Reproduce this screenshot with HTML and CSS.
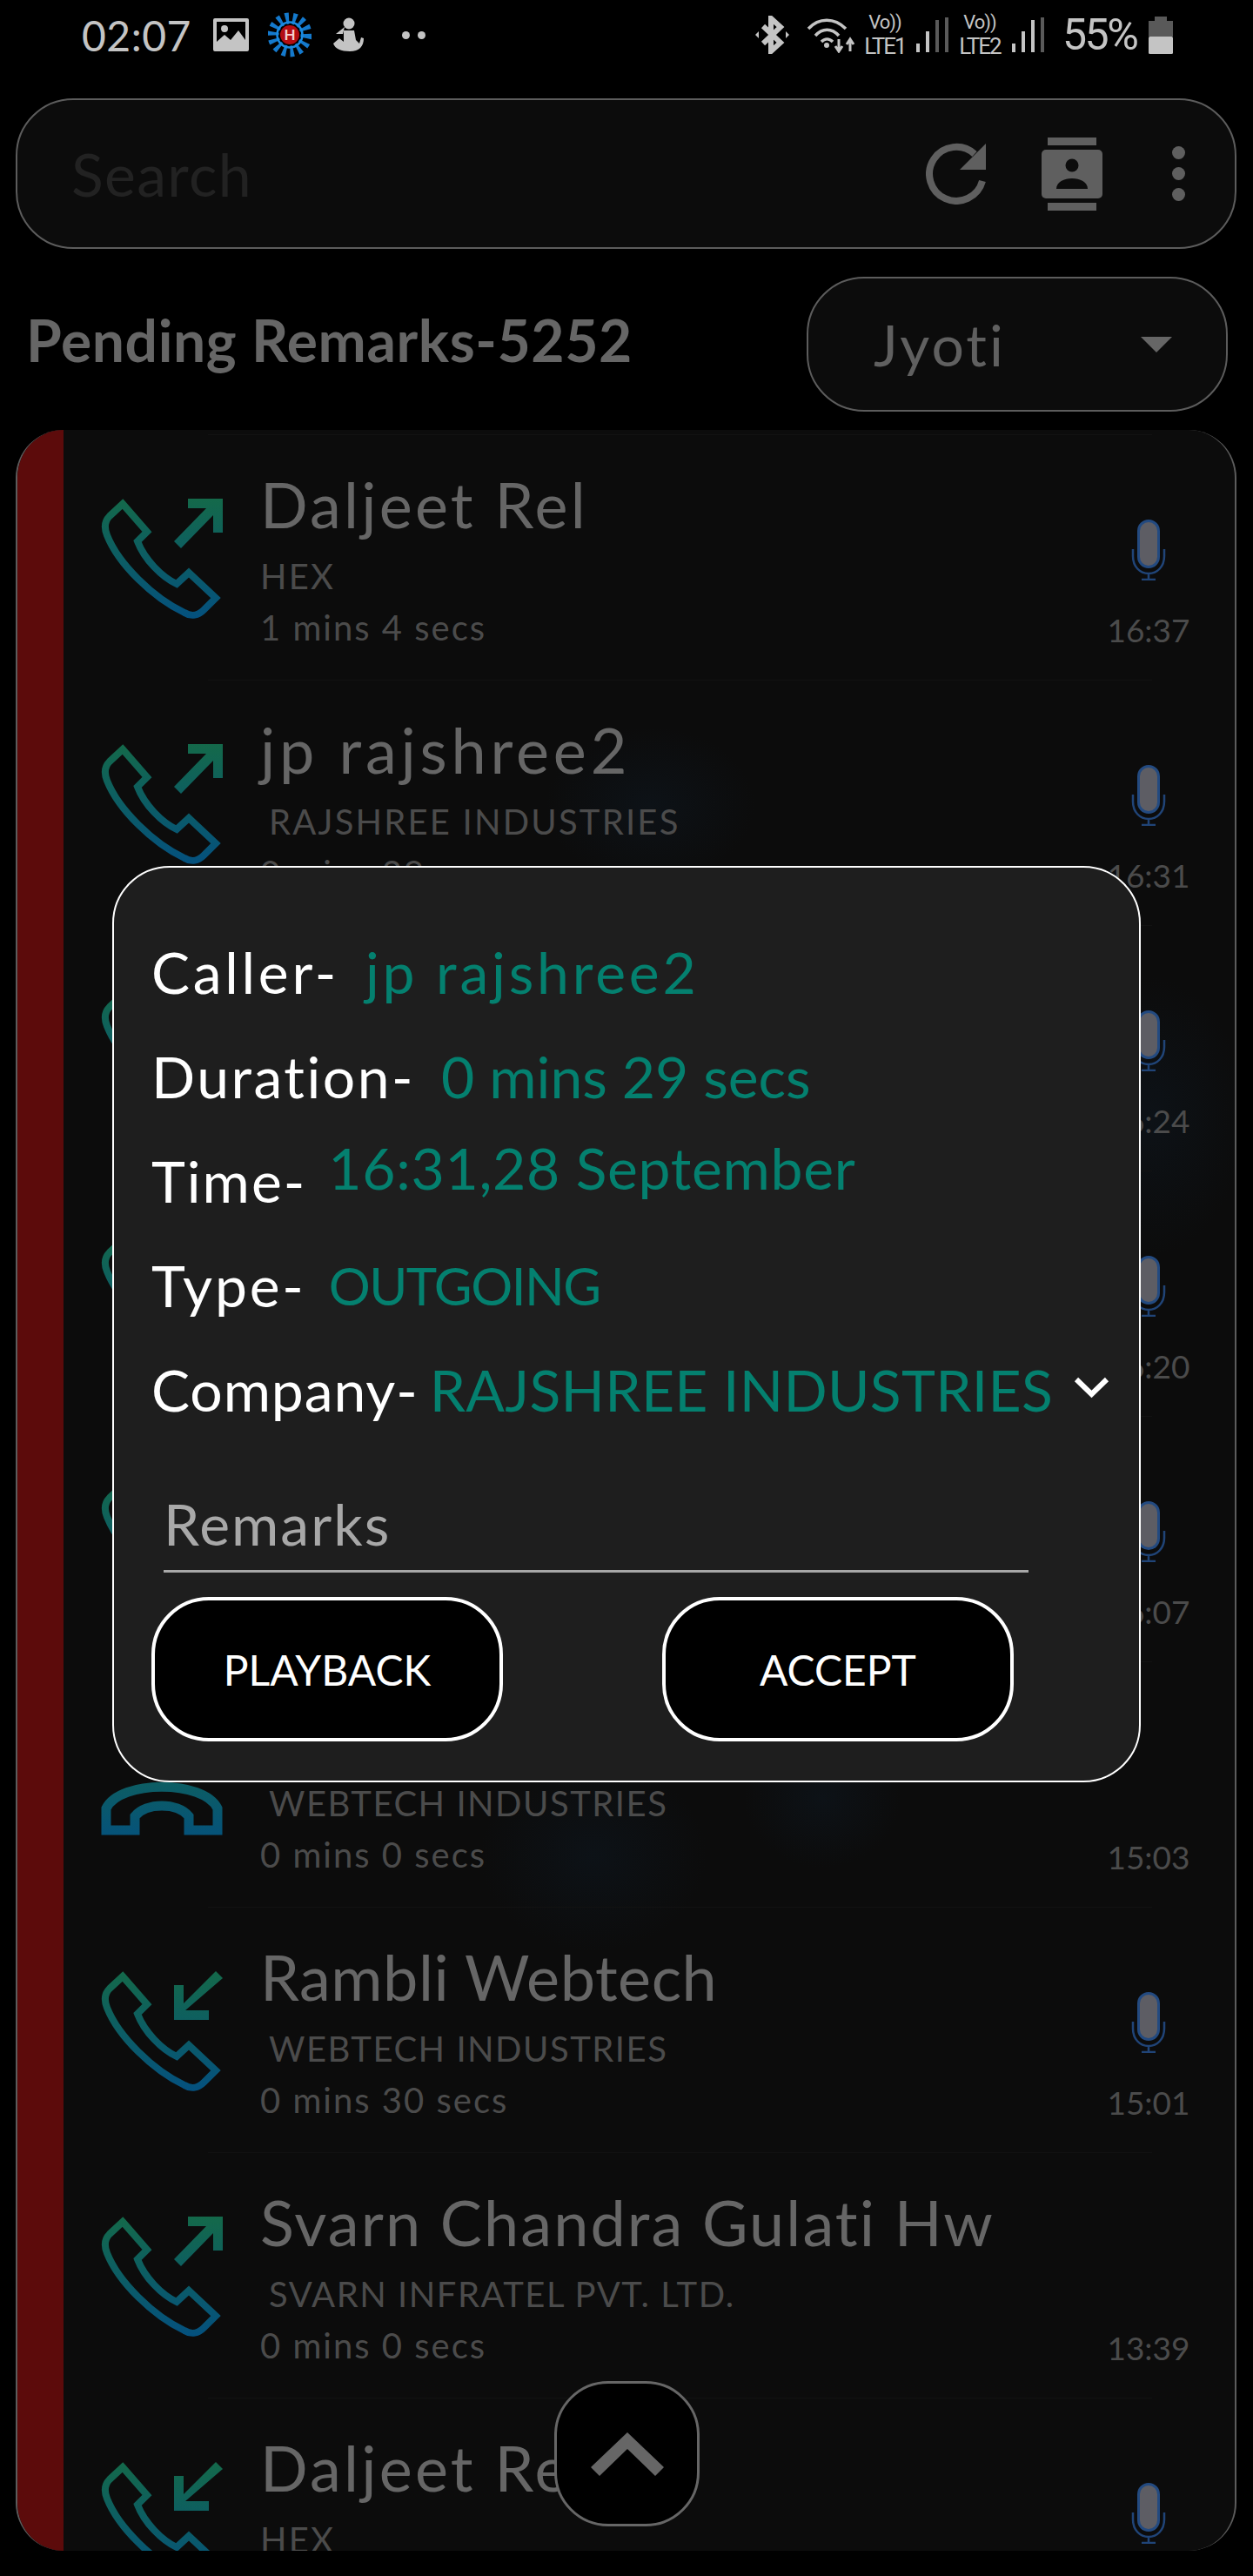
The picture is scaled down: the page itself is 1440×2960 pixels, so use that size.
FILE: index.html
```html
<!DOCTYPE html>
<html lang="en">
<head>
    <meta charset="UTF-8">
    <meta name="viewport" content="width=device-width, initial-scale=1.0">
    <title>Pending Remarks</title>
    <link rel="stylesheet" href="styles.css">
</head>
<body>
    <svg class="defs" width="0" height="0">
        <defs>
            <linearGradient id="callGrad" gradientUnits="userSpaceOnUse" x1="0" y1="0" x2="0" y2="140">
                <stop offset="0" stop-color="#14694a"/>
                <stop offset="1" stop-color="#04507f"/>
            </linearGradient>
            <symbol id="handset" viewBox="0 0 140 140">
                <path d="M25 6 L53 38 L42 49 C50 70 70 90 87 98 L101 85 L132 114 L118 128 C112 134 104 136 96 131 C60 114 20 75 7 42 C3 32 5 25 10 20 Z" fill="none" stroke="url(#callGrad)" stroke-width="8"/>
            </symbol>
            <symbol id="outCall" viewBox="0 0 140 140">
                <use href="#handset" width="140" height="140"/>
                <polygon points="100,0 140,0 140,39 129,39 129,19 92,57 84,49 121,11 100,11" fill="url(#callGrad)"/>
            </symbol>
            <symbol id="inCall" viewBox="0 0 140 140">
                <use href="#handset" width="140" height="140"/>
                <polygon points="132,0 140,8 97,45 124,45 124,56 84,56 84,16 95,16 95,37" fill="url(#callGrad)"/>
            </symbol>
            <symbol id="hangCall" viewBox="0 0 140 140">
                <path d="M6 120 V95 C22 62 118 62 134 95 V120 H101 V104 C88 88 52 88 39 104 V120 Z" fill="none" stroke="url(#callGrad)" stroke-width="11"/>
            </symbol>
            <symbol id="mic" viewBox="0 0 40 70">
                <rect x="8.5" y="1.5" width="23" height="53" rx="11.5" fill="#5d5d64" stroke="#234a80" stroke-width="3"/>
                <path d="M2 34 V42 C2 54 10 62 20 62 C30 62 38 54 38 42 V34 M20 62 V69 M12 69 H28" fill="none" stroke="#204477" stroke-width="2.5"/>
            </symbol>
        </defs>
    </svg>

    <div class="status-bar">
        <span class="clock">02:07</span>
        <svg class="st-img" viewBox="0 0 41 38"><path d="M2 0 H39 A2 2 0 0 1 41 2 V36 A2 2 0 0 1 39 38 H2 A2 2 0 0 1 0 36 V2 A2 2 0 0 1 2 0 Z M4 4 V27 L13 19 L20 25 L29 14 L37 25 V4 Z" fill="#c4c4c4" fill-rule="evenodd"/><circle cx="13" cy="12" r="4" fill="#c4c4c4"/></svg>
        <svg class="st-logo" viewBox="0 0 50 54">
            <circle cx="25" cy="27" r="19" fill="none" stroke="#1479cc" stroke-width="13" stroke-dasharray="4 4.4"/>
            <circle cx="25" cy="27" r="14.5" fill="none" stroke="#1a8ae0" stroke-width="2.5"/>
            <circle cx="25" cy="27" r="11" fill="#b30d12"/>
            <text x="25" y="33" class="logo-h" text-anchor="middle">H</text>
        </svg>
        <svg class="st-fig" viewBox="0 0 36 40"><circle cx="19" cy="7" r="6.5" fill="#c4c4c4"/><path d="M14 11 L4 19 L12 19 Z" fill="#c4c4c4"/><path d="M13 15 H25 L27 26 L31 30 L33 23 L36 24 C36 33 31 39 20 39 C10 39 3 36 1 30 L8 24 L13 28 Z" fill="#c4c4c4"/></svg>
        <span class="st-dots"><i></i><i></i></span>

        <svg class="st-bt" viewBox="0 0 39 44"><path d="M9 12 L29 31 L18 41 V3 L29 13 L9 32" fill="none" stroke="#c4c4c4" stroke-width="6"/><path d="M0 22 L4 18 V26 Z M39 22 L35 18 V26 Z" fill="#c4c4c4"/></svg>
        <svg class="st-wifi" viewBox="0 0 57 42">
            <path d="M2 14 C14 1 32 1 45 14 M10 22 C18 13 29 13 37 22 M17 29 C21 25 26 25 30 29" fill="none" stroke="#c4c4c4" stroke-width="3.5"/>
            <circle cx="23" cy="33" r="3" fill="#c4c4c4"/>
            <path d="M37 26 V38 M33 34 L37 40 L41 34 M50 40 V28 M46 32 L50 26 L54 32" fill="none" stroke="#c4c4c4" stroke-width="3"/>
        </svg>
        <span class="st-lte lte-one"><b class="vo">Vo))</b><b>LTE1</b></span>
        <svg class="st-signal sig-one" viewBox="0 0 37 40"><rect x="0" y="30" width="4" height="10" fill="#c4c4c4"/><rect x="11" y="16" width="4" height="24" fill="#c4c4c4"/><rect x="22" y="3" width="4" height="37" fill="#5a5a5a"/><rect x="33" y="0" width="4" height="40" fill="#5a5a5a"/></svg>
        <span class="st-lte lte-two"><b class="vo">Vo))</b><b>LTE2</b></span>
        <svg class="st-signal sig-two" viewBox="0 0 37 40"><rect x="0" y="30" width="4" height="10" fill="#c4c4c4"/><rect x="11" y="16" width="4" height="24" fill="#c4c4c4"/><rect x="22" y="3" width="4" height="37" fill="#c4c4c4"/><rect x="33" y="0" width="4" height="40" fill="#5a5a5a"/></svg>
        <span class="st-pct">55%</span>
        <svg class="st-bat" viewBox="0 0 28 43"><rect x="7" y="0" width="14" height="5" fill="#595959"/><rect x="0" y="5" width="28" height="18" fill="#595959"/><rect x="0" y="23" width="28" height="20" rx="1.5" fill="#c4c4c4"/></svg>
    </div>

    <div class="search-bar">
        <span class="search-text">Search</span>
        <svg class="ic-refresh" viewBox="0 0 70 71"><path d="M56 13 A31 31 0 1 0 65 44" fill="none" stroke="#5f5f5f" stroke-width="8"/><polygon points="69,1 69,31 39,31" fill="#5f5f5f"/></svg>
        <svg class="ic-contact" viewBox="0 0 70 84">
            <rect x="7" y="0" width="56" height="9" fill="#5f5f5f"/>
            <rect x="7" y="75" width="56" height="9" fill="#5f5f5f"/>
            <rect x="0" y="14" width="70" height="56" rx="5" fill="#5f5f5f"/>
            <circle cx="35" cy="32" r="7.5" fill="#0c0c0c"/>
            <path d="M17 59 C17 43 53 43 53 59 Z" fill="#0c0c0c"/>
        </svg>
        <span class="ic-more"><i></i><i></i><i></i></span>
    </div>

    <div class="title-row">
        <h1 class="title">Pending Remarks-5252</h1>
        <div class="dropdown">
            <span class="dropdown-text">Jyoti</span>
            <span class="dropdown-arrow"></span>
        </div>
    </div>

    <div class="card">
        <div class="card-bar"></div>
        <div class="list">
            <hr class="sep">
            <div class="row">
                <svg class="call-icon"><use href="#outCall"/></svg>
                <div class="info">
                    <div class="name">Daljeet Rel</div>
                    <div class="company">HEX</div>
                    <div class="duration">1 mins 4 secs</div>
                </div>
                <div class="side">
                    <svg class="mic"><use href="#mic"/></svg>
                    <div class="time">16:37</div>
                </div>
            </div>
            <hr class="sep">
            <div class="row">
                <svg class="call-icon"><use href="#outCall"/></svg>
                <div class="info">
                    <div class="name name-wide">jp rajshree2</div>
                    <div class="company indent">RAJSHREE INDUSTRIES</div>
                    <div class="duration">0 mins 29 secs</div>
                </div>
                <div class="side">
                    <svg class="mic"><use href="#mic"/></svg>
                    <div class="time">16:31</div>
                </div>
            </div>
            <hr class="sep">
            <div class="row">
                <svg class="call-icon"><use href="#outCall"/></svg>
                <div class="info"></div>
                <div class="side">
                    <svg class="mic"><use href="#mic"/></svg>
                    <div class="time">16:24</div>
                </div>
            </div>
            <hr class="sep">
            <div class="row">
                <svg class="call-icon"><use href="#outCall"/></svg>
                <div class="info"></div>
                <div class="side">
                    <svg class="mic"><use href="#mic"/></svg>
                    <div class="time">16:20</div>
                </div>
            </div>
            <hr class="sep">
            <div class="row">
                <svg class="call-icon"><use href="#outCall"/></svg>
                <div class="info"></div>
                <div class="side">
                    <svg class="mic"><use href="#mic"/></svg>
                    <div class="time">16:07</div>
                </div>
            </div>
            <hr class="sep">
            <div class="row">
                <svg class="call-icon"><use href="#hangCall"/></svg>
                <div class="info">
                    <div class="name">&nbsp;</div>
                    <div class="company indent co-tight">WEBTECH INDUSTRIES</div>
                    <div class="duration">0 mins 0 secs</div>
                </div>
                <div class="side">
                    <div class="mic-space"></div>
                    <div class="time">15:03</div>
                </div>
            </div>
            <hr class="sep">
            <div class="row">
                <svg class="call-icon"><use href="#inCall"/></svg>
                <div class="info">
                    <div class="name name-tight">Rambli Webtech</div>
                    <div class="company indent co-tight">WEBTECH INDUSTRIES</div>
                    <div class="duration">0 mins 30 secs</div>
                </div>
                <div class="side">
                    <svg class="mic"><use href="#mic"/></svg>
                    <div class="time">15:01</div>
                </div>
            </div>
            <hr class="sep">
            <div class="row">
                <svg class="call-icon"><use href="#outCall"/></svg>
                <div class="info">
                    <div class="name name-long">Svarn Chandra Gulati Hw</div>
                    <div class="company indent co-tight">SVARN INFRATEL PVT. LTD.</div>
                    <div class="duration">0 mins 0 secs</div>
                </div>
                <div class="side">
                    <div class="mic-space"></div>
                    <div class="time">13:39</div>
                </div>
            </div>
            <hr class="sep">
            <div class="row">
                <svg class="call-icon"><use href="#inCall"/></svg>
                <div class="info">
                    <div class="name">Daljeet Rel</div>
                    <div class="company">HEX</div>
                </div>
                <div class="side">
                    <svg class="mic"><use href="#mic"/></svg>
                </div>
            </div>
        </div>
    </div>

    <button class="top-btn">
        <svg viewBox="0 0 84 50"><polygon points="42,0 84,40 74,50 42,19 10,50 0,40" fill="#666"/></svg>
    </button>

    <div class="dialog">
        <div class="line"><span class="label l-caller">Caller-</span><span class="value v-caller">jp rajshree2</span></div>
        <div class="line"><span class="label l-duration">Duration-</span><span class="value v-duration">0 mins 29 secs</span></div>
        <div class="line"><span class="label l-time">Time-</span><span class="value v-time">16:31,28 September</span></div>
        <div class="line"><span class="label l-type">Type-</span><span class="value v-type">OUTGOING</span></div>
        <div class="line">
            <span class="label l-company">Company-</span><span class="value v-company">RAJSHREE INDUSTRIES</span>
            <svg class="chevron" viewBox="0 0 41 25"><polyline points="3,3 20.5,20 38,3" fill="none" stroke="#fff" stroke-width="6"/></svg>
        </div>
        <div class="remarks">Remarks</div>
        <div class="buttons">
            <button class="btn">PLAYBACK</button>
            <button class="btn">ACCEPT</button>
        </div>
    </div>
</body>
</html>
```

FILE: styles.css
```css
* {
    box-sizing: border-box;
}
html, body {
    margin: 0;
    padding: 0;
}
body {
    width: 1440px;
    height: 2960px;
    overflow: hidden;
    background-color: #000;
    font-family: Lato, "Noto Sans", sans-serif;
    position: relative;
}
.defs {
    position: absolute;
}

/* status bar */
.status-bar {
    height: 113px;
    padding: 0 92px 33px 94px;
    display: flex;
    align-items: center;
}
.clock {
    width: 123px;
    font-size: 48px;
    letter-spacing: 0.5px;
    color: #c4c4c4;
}
.st-img { width: 41px; height: 38px; margin-left: 28px; }
.st-logo { width: 50px; height: 54px; margin-left: 22px; }
.logo-h { font-size: 17px; font-weight: 700; fill: #f3d0d0; }
.st-fig { width: 36px; height: 40px; margin-left: 24px; }
.st-dots {
    margin-left: 44px;
    display: flex;
    gap: 9px;
}
.st-dots i {
    width: 9px;
    height: 9px;
    border-radius: 50%;
    background-color: #c4c4c4;
}
.st-bt { width: 39px; height: 44px; margin-left: auto; }
.st-wifi { width: 57px; height: 42px; margin-left: 20px; }
.st-lte {
    width: 52px;
    height: 42px;
    margin-left: 7px;
    display: flex;
    flex-direction: column;
    align-items: center;
    justify-content: center;
    font-family: Roboto, sans-serif;
    color: #c4c4c4;
    letter-spacing: -2px;
}
.st-lte b {
    font-weight: 400;
    font-size: 26px;
}
.st-lte .vo {
    font-size: 22px;
    letter-spacing: -1px;
}
.lte-two { margin-left: 10px; }
.st-signal { width: 37px; height: 40px; margin-left: 10px; }
.sig-two { margin-left: 11px; }
.st-pct {
    width: 87px;
    margin-left: 21px;
    font-family: Roboto, sans-serif;
    font-size: 50px;
    letter-spacing: -2.5px;
    color: #c4c4c4;
}
.st-bat { width: 28px; height: 43px; margin-left: 12px; }

/* search */
.search-bar {
    height: 173px;
    margin: 0 19px 0 18px;
    padding: 0 56px 0 62px;
    display: flex;
    align-items: center;
    background-color: #0c0c0c;
    border: 2px solid #5c5c5c;
    border-radius: 66px;
}
.search-text {
    font-size: 68px;
    letter-spacing: 1.3px;
    color: #222;
}
.ic-refresh { width: 70px; height: 71px; margin-left: auto; }
.ic-contact { width: 70px; height: 84px; margin-left: 63px; }
.ic-more {
    width: 16px;
    margin-left: 80px;
    display: flex;
    flex-direction: column;
    gap: 9px;
}
.ic-more i {
    width: 15px;
    height: 15px;
    border-radius: 50%;
    background-color: #5f5f5f;
}

/* title row */
.title-row {
    height: 208px;
    padding: 32px 29px 21px 30px;
    display: flex;
    align-items: flex-start;
}
.title {
    margin: 37px 0 0 0;
    font-size: 66px;
    font-weight: 700;
    letter-spacing: 0.6px;
    line-height: 72px;
    color: #666;
}
.dropdown {
    width: 484px;
    height: 155px;
    margin-left: auto;
    padding: 0 62px 0 75px;
    display: flex;
    align-items: center;
    justify-content: space-between;
    background-color: #0c0c0c;
    border: 2px solid #5c5c5c;
    border-radius: 66px;
}
.dropdown-text {
    font-size: 66px;
    letter-spacing: 3px;
    color: #606060;
}
.dropdown-arrow {
    width: 0;
    height: 0;
    border-left: 18px solid transparent;
    border-right: 18px solid transparent;
    border-top: 18px solid #666;
}

/* call list */
.card {
    height: 2437px;
    margin: 0 19px 0 18px;
    display: flex;
    overflow: hidden;
    background-color: #0c0c0c;
    background-image:
        radial-gradient(ellipse 120px 90px at 727px 431px, #0d1217, transparent),
        radial-gradient(ellipse 110px 160px at 1302px 789px, #0d1217, transparent),
        radial-gradient(ellipse 130px 110px at 662px 1638px, #0d1217, transparent),
        radial-gradient(ellipse 90px 80px at 925px 1572px, #0d1217, transparent);
    border-left: 2px solid #5c5c5c;
    border-right: 2px solid #5c5c5c;
    border-radius: 55px;
}
.card-bar {
    width: 53px;
    flex-shrink: 0;
    background-color: #5c0b0b;
}
.list {
    flex: 1;
    padding-top: 5px;
}
.sep {
    height: 1px;
    margin: 0 95px 0 166px;
    border: none;
    background-color: #121212;
}
.row {
    height: 281px;
    padding: 0 49px 0 43px;
    display: grid;
    grid-template-columns: 140px 1fr 100px;
    column-gap: 43px;
    align-items: start;
}
.call-icon {
    width: 140px;
    height: 140px;
    margin-top: 73px;
}
.info {
    padding-top: 34px;
}
.name {
    height: 90px;
    font-size: 72px;
    letter-spacing: 3.2px;
    line-height: 90px;
    color: #666;
}
.name-wide {
    letter-spacing: 4.8px;
}
.name-tight {
    letter-spacing: 0.5px;
}
.name-long {
    letter-spacing: 2.1px;
}
.company {
    height: 50px;
    margin-top: 13px;
    font-size: 40px;
    letter-spacing: 2.2px;
    line-height: 50px;
    color: #4b4b4b;
}
.co-tight {
    letter-spacing: 1.5px;
}
.indent {
    margin-left: 10px;
}
.duration {
    height: 50px;
    margin-top: 9px;
    font-size: 40px;
    letter-spacing: 2px;
    line-height: 50px;
    color: #4b4b4b;
}
.side {
    padding-top: 97px;
    display: flex;
    flex-direction: column;
    align-items: center;
}
.mic {
    width: 40px;
    height: 70px;
}
.mic-space {
    height: 70px;
}
.time {
    margin-top: 32px;
    font-size: 37px;
    line-height: 50px;
    color: #4b4b4b;
}

/* scroll to top */
.top-btn {
    position: absolute;
    left: 637px;
    top: 2736px;
    width: 167px;
    height: 167px;
    padding: 0;
    display: flex;
    align-items: center;
    justify-content: center;
    background-color: #000;
    border: 3px solid #666;
    border-radius: 62px;
}
.top-btn svg {
    width: 84px;
    height: 50px;
}

/* dialog */
.dialog {
    position: absolute;
    left: 129px;
    top: 995px;
    width: 1182px;
    height: 1053px;
    padding: 60px 0 0 43px;
    background-color: #1e1e1e;
    border: 2px solid #fff;
    border-radius: 66px;
}
.line {
    height: 120px;
    display: flex;
    align-items: flex-start;
}
.label {
    font-size: 66px;
    line-height: 120px;
    color: #fff;
}
.l-caller { letter-spacing: 3.7px; }
.l-duration { letter-spacing: 2.5px; }
.l-time { letter-spacing: 2px; }
.l-type { letter-spacing: 2.8px; }
.l-company { letter-spacing: 0.9px; }
.value {
    margin-left: 30px;
    font-size: 66px;
    line-height: 120px;
    color: #04806f;
}
.v-caller { letter-spacing: 3.8px; }
.v-time {
    margin-left: 25px;
    letter-spacing: 0.7px;
    line-height: 90px;
}
.v-type {
    margin-left: 26px;
    font-size: 60px;
    letter-spacing: -1.5px;
}
.v-company {
    margin-left: 13px;
    letter-spacing: 0.3px;
}
.chevron {
    width: 41px;
    height: 25px;
    margin: 45px 0 0 24px;
}
.remarks {
    width: 994px;
    height: 150px;
    margin-left: 14px;
    padding-bottom: 3px;
    display: flex;
    align-items: flex-end;
    font-size: 66px;
    letter-spacing: 2px;
    line-height: 100px;
    color: #a8a8a8;
    border-bottom: 3px solid #a8a8a8;
}
.buttons {
    margin-top: 28px;
    display: flex;
    gap: 183px;
}
.btn {
    width: 404px;
    height: 166px;
    padding: 0;
    font-family: Lato, sans-serif;
    font-size: 48px;
    color: #fff;
    background-color: #000;
    border: 4px solid #fff;
    border-radius: 66px;
}
```
